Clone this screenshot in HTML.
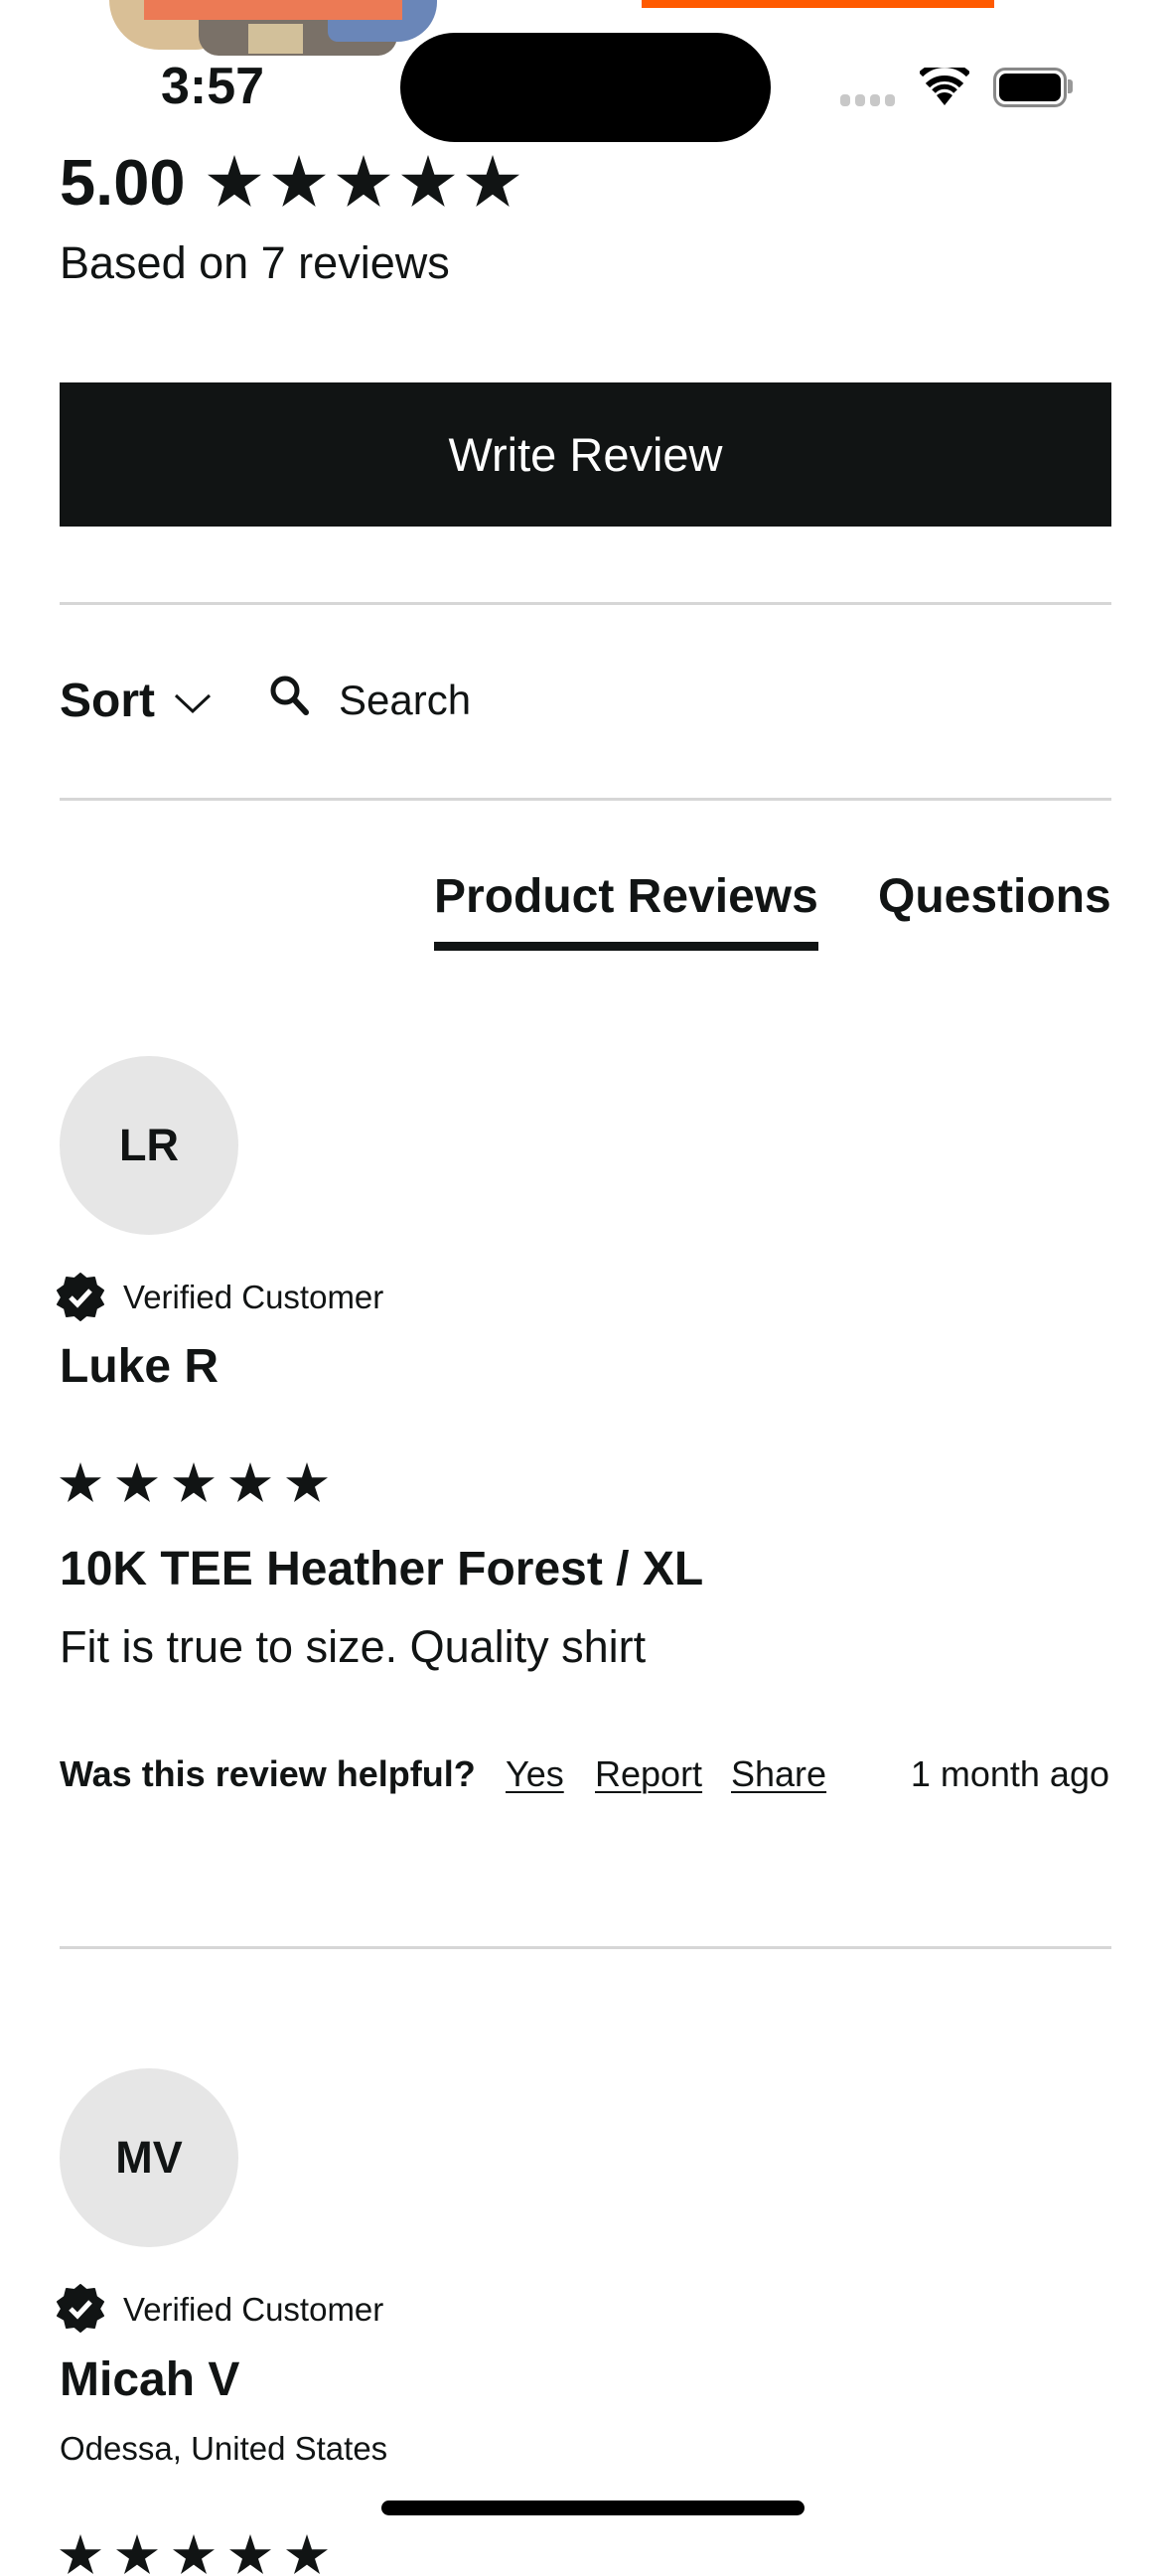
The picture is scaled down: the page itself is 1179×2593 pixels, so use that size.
<!DOCTYPE html>
<html><head><meta charset="utf-8"><style>
*{margin:0;padding:0;box-sizing:border-box}
body{width:1179px;height:2556px;background:#fff;position:relative;overflow:hidden;font-family:"Liberation Sans",sans-serif;color:#111414}
.a{position:absolute;white-space:nowrap;line-height:1}
.b{font-weight:bold}
.hr{position:absolute;left:60px;width:1059px;height:3px;background:#d6d6d6}
.av{position:absolute;left:60px;width:180px;height:180px;border-radius:50%;background:#e6e6e6;font-weight:bold;font-size:45px;display:flex;align-items:center;justify-content:center}
u{text-decoration:underline;text-underline-offset:5px;text-decoration-thickness:2px}
</style></head><body>
<div class="a" style="left:70px;top:0;width:380px;height:58px;">
<div style="position:absolute;left:40px;top:0;width:120px;height:50px;background:#d9bf96;border-radius:0 0 40px 60px"></div>
<div style="position:absolute;left:130px;top:14px;width:200px;height:42px;background:#7a7168;border-radius:0 0 20px 20px"></div>
<div style="position:absolute;left:180px;top:24px;width:55px;height:30px;background:#d2c09a"></div>
<div style="position:absolute;left:260px;top:0;width:110px;height:42px;background:#6a86b8;border-radius:0 0 40px 10px"></div>
<div style="position:absolute;left:75px;top:0;width:260px;height:20px;background:#ec7a55"></div>
</div>
<div class="a" style="left:646px;top:0;width:355px;height:8px;background:#ff5a00"></div>
<div class="a b" style="left:162px;top:61px;font-size:52px">3:57</div>
<div class="a" style="left:403px;top:33px;width:373px;height:110px;border-radius:55px;background:#000"></div>
<div class="a" style="left:846px;top:95px;width:60px;height:12px">
<span style="position:absolute;left:0;width:10px;height:12px;border-radius:4px;background:#c8c8c8"></span>
<span style="position:absolute;left:15px;width:10px;height:12px;border-radius:4px;background:#c8c8c8"></span>
<span style="position:absolute;left:30px;width:10px;height:12px;border-radius:4px;background:#c8c8c8"></span>
<span style="position:absolute;left:45px;width:10px;height:12px;border-radius:4px;background:#c8c8c8"></span>
</div>
<svg class="a" style="left:926px;top:68px" width="50" height="40" viewBox="0 0 50 40"><path d="M25 38 L17 28 A12 12 0 0 1 33 28 Z" fill="#000"/><path d="M8 18 A24 24 0 0 1 42 18" stroke="#000" stroke-width="6" fill="none"/><path d="M1 9 A34 34 0 0 1 49 9" stroke="#000" stroke-width="6" fill="none" transform="translate(0,-2)"/><path d="M14 24 A15 15 0 0 1 36 24" stroke="#000" stroke-width="5" fill="none"/></svg>
<div class="a" style="left:1000px;top:68px;width:74px;height:40px;border:3px solid #888;border-radius:12px;padding:3px"><div style="width:100%;height:100%;background:#000;border-radius:7px"></div></div>
<div class="a" style="left:1075px;top:80px;width:5px;height:14px;background:#999;border-radius:0 3px 3px 0"></div>
<div class="a b" style="left:60px;top:151px;font-size:65px">5.00</div>
<svg class="a" style="left:209px;top:156px" width="320" height="56" viewBox="0 0 320 56">
<defs><polygon id="s" points="27,0 33.4,19.7 54,19.7 37.3,31.9 43.7,52 27,39.8 10.3,52 16.7,31.9 0,19.7 20.6,19.7"/></defs>
<use href="#s" fill="#111414"/><use href="#s" x="65" fill="#111414"/><use href="#s" x="130" fill="#111414"/><use href="#s" x="195" fill="#111414"/><use href="#s" x="260" fill="#111414"/></svg>
<div class="a" style="left:60px;top:242px;font-size:45px">Based on 7 reviews</div>
<div class="a" style="left:60px;top:385px;width:1059px;height:145px;background:#111414;color:#fff;font-size:47px;display:flex;align-items:center;justify-content:center">Write Review</div>
<div class="hr" style="top:606px"></div>
<div class="a b" style="left:60px;top:682px;font-size:48px">Sort</div>
<svg class="a" style="left:174px;top:692px" width="40" height="30" viewBox="0 0 40 30"><path d="M3 8 L20 24 L37 8" stroke="#111414" stroke-width="3" fill="none"/></svg>
<svg class="a" style="left:270px;top:678px" width="44" height="44" viewBox="0 0 44 44"><circle cx="17" cy="17" r="12" stroke="#111414" stroke-width="5" fill="none"/><path d="M26 26 L38 39" stroke="#111414" stroke-width="6" stroke-linecap="round"/></svg>
<div class="a" style="left:341px;top:684px;font-size:42px">Search</div>
<div class="hr" style="top:803px"></div>
<div class="a b" style="left:437px;top:879px;font-size:48px">Product Reviews</div>
<div class="a" style="left:437px;top:948px;width:387px;height:9px;background:#111414"></div>
<div class="a b" style="left:884px;top:879px;font-size:48px">Questions</div>
<div class="av" style="top:1063px">LR</div>
<svg class="a" style="left:57px;top:1281px" width="48" height="49" viewBox="0 0 48 49"><path d="M24 1 L30 6 L38 5 L40 13 L47 18 L43 25 L47 32 L40 36 L38 44 L30 43 L24 48 L18 43 L10 44 L8 36 L1 32 L5 25 L1 18 L8 13 L10 5 L18 6 Z" fill="#111414" stroke="#111414" stroke-width="2" stroke-linejoin="round"/><path d="M14 25 L21 32 L34 18" stroke="#fff" stroke-width="5" fill="none"/></svg>
<div class="a" style="left:124px;top:1289px;font-size:33px">Verified Customer</div>
<div class="a b" style="left:60px;top:1352px;font-size:48px">Luke R</div>
<svg class="a" style="left:60px;top:1472px" width="290" height="42" viewBox="0 0 290 42">
<defs><polygon id="t" points="21,0 26,15.2 42,15.2 29,24.6 34,40 21,30.6 8,40 13,24.6 0,15.2 16,15.2"/></defs>
<use href="#t" fill="#111414"/><use href="#t" x="57" fill="#111414"/><use href="#t" x="114" fill="#111414"/><use href="#t" x="171" fill="#111414"/><use href="#t" x="228" fill="#111414"/></svg>
<div class="a b" style="left:60px;top:1556px;font-size:48px">10K TEE Heather Forest / XL</div>
<div class="a" style="left:60px;top:1635px;font-size:45px">Fit is true to size. Quality shirt</div>
<div class="a b" style="left:60px;top:1768px;font-size:36px">Was this review helpful?</div>
<div class="a" style="left:509px;top:1768px;font-size:36px"><u>Yes</u></div>
<div class="a" style="left:599px;top:1768px;font-size:36px"><u>Report</u></div>
<div class="a" style="left:736px;top:1768px;font-size:36px"><u>Share</u></div>
<div class="a" style="right:62px;top:1768px;font-size:36px">1 month ago</div>
<div class="hr" style="top:1959px"></div>
<div class="av" style="top:2082px">MV</div>
<svg class="a" style="left:57px;top:2299px" width="48" height="49" viewBox="0 0 48 49"><path d="M24 1 L30 6 L38 5 L40 13 L47 18 L43 25 L47 32 L40 36 L38 44 L30 43 L24 48 L18 43 L10 44 L8 36 L1 32 L5 25 L1 18 L8 13 L10 5 L18 6 Z" fill="#111414" stroke="#111414" stroke-width="2" stroke-linejoin="round"/><path d="M14 25 L21 32 L34 18" stroke="#fff" stroke-width="5" fill="none"/></svg>
<div class="a" style="left:124px;top:2308px;font-size:33px">Verified Customer</div>
<div class="a b" style="left:60px;top:2372px;font-size:48px">Micah V</div>
<div class="a" style="left:60px;top:2448px;font-size:33px">Odessa, United States</div>
<svg class="a" style="left:60px;top:2551px" width="290" height="42" viewBox="0 0 290 42">
<use href="#t" fill="#111414"/><use href="#t" x="57" fill="#111414"/><use href="#t" x="114" fill="#111414"/><use href="#t" x="171" fill="#111414"/><use href="#t" x="228" fill="#111414"/></svg>
<div class="a" style="left:384px;top:2517px;width:426px;height:15px;border-radius:8px;background:#000"></div>
</body></html>
